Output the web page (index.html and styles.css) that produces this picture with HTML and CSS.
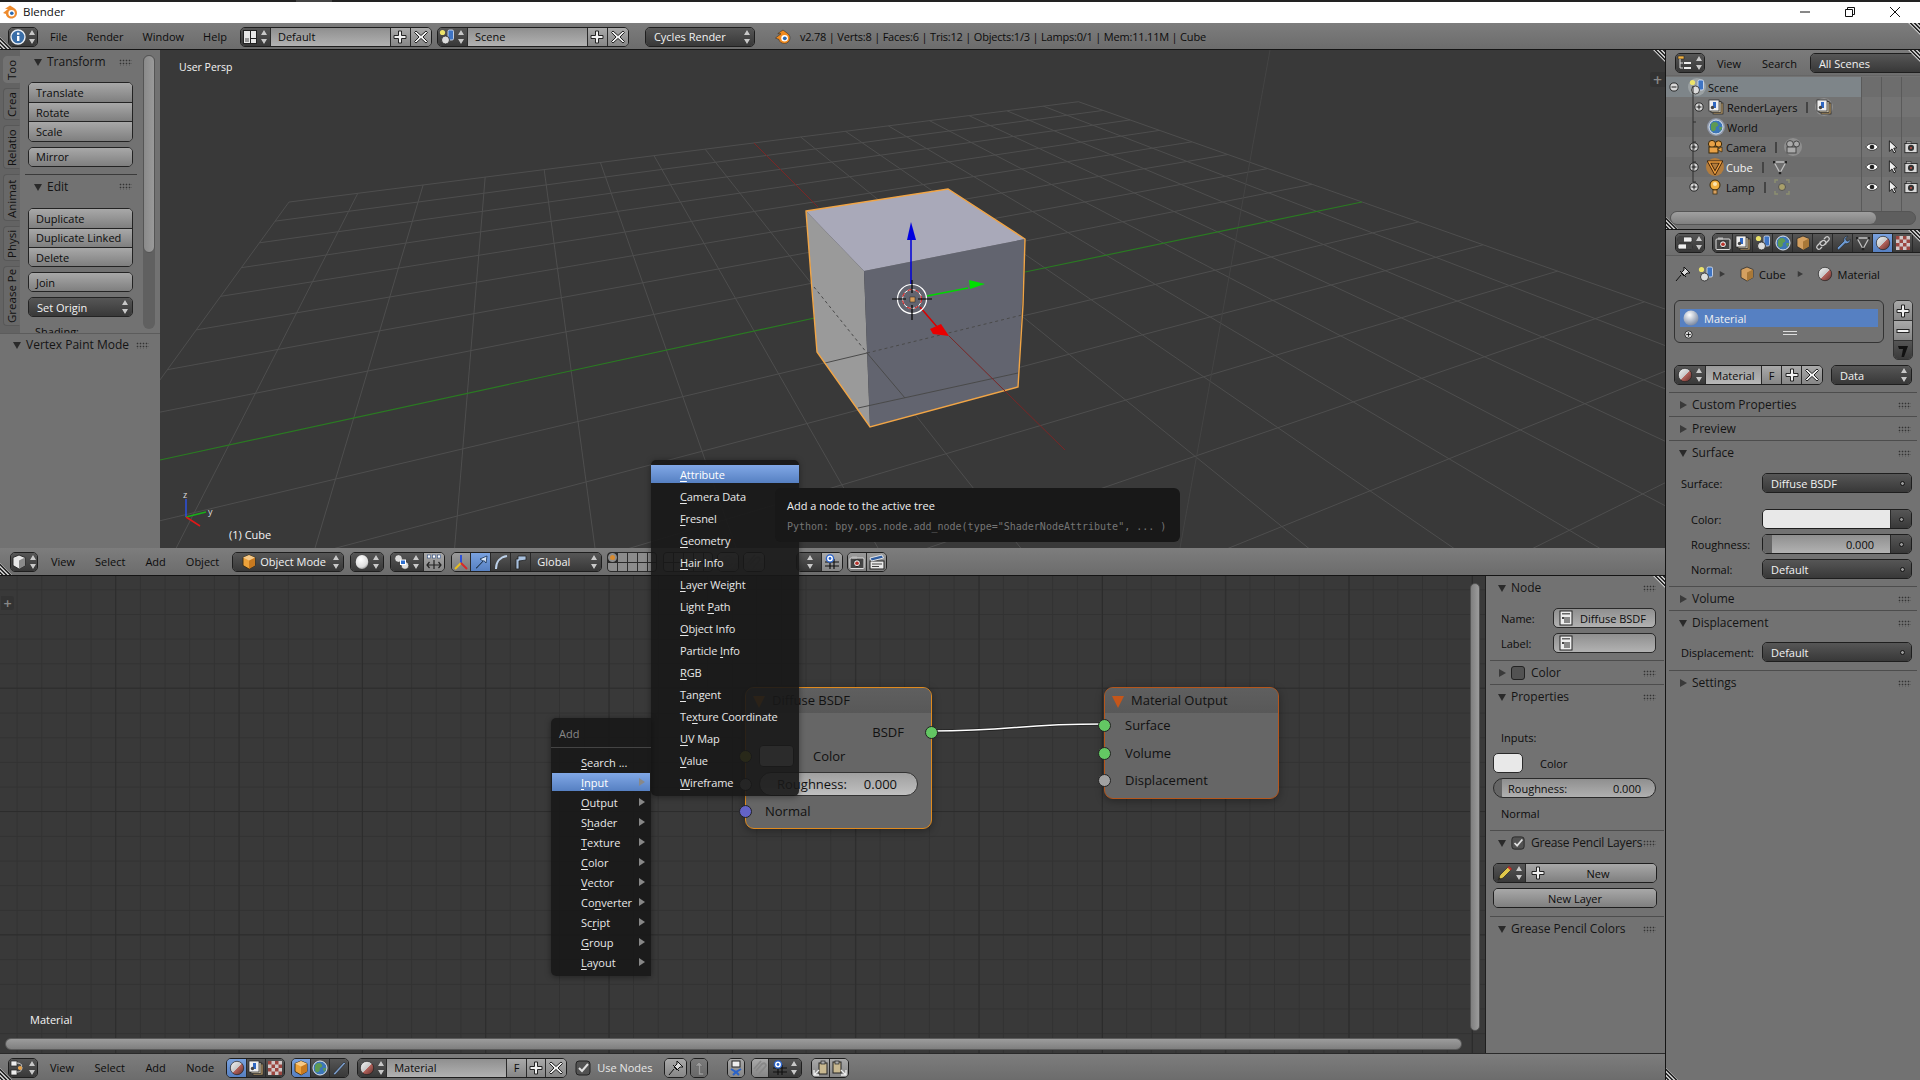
FILE: index.html
```html
<!DOCTYPE html>
<html lang="en">
<head>
<meta charset="utf-8">
<title>Blender</title>
<link rel="stylesheet" href="styles.css">
</head>
<body>
<svg class="sprite" aria-hidden="true">
<defs>
<symbol id="i-ud" viewBox="0 0 8 16"><path d="M4 1l3 5H1z M4 15l3-5H1z" fill="#c8c8c8"/></symbol>
<symbol id="i-tdown" viewBox="0 0 8 8"><path d="M0 1h8L4 8z" fill="#2a2a2a"/></symbol>
<symbol id="i-tright" viewBox="0 0 8 8"><path d="M1 0v8l7-4z" fill="#3a3a3a"/></symbol>
<symbol id="i-info" viewBox="0 0 16 16"><circle cx="8" cy="8" r="7" fill="#3a6ea8" stroke="#e8eef5" stroke-width="1.4"/><rect x="7" y="7" width="2.4" height="5" fill="#fff"/><rect x="7" y="3.6" width="2.4" height="2.2" fill="#fff"/></symbol>
<symbol id="i-layout" viewBox="0 0 16 16"><rect x="1" y="1" width="14" height="14" fill="#222"/><rect x="2" y="2" width="6" height="12" fill="#e8e8e8"/><rect x="9" y="2" width="5" height="7" fill="#e8e8e8"/><rect x="9" y="10" width="5" height="4" fill="#e8e8e8"/><rect x="3" y="9" width="4" height="4" fill="#999"/></symbol>
<symbol id="i-scene" viewBox="0 0 16 16"><circle cx="3.5" cy="3.5" r="2.6" fill="#ece36a"/><rect x="9" y="1" width="5.5" height="10" rx="1.4" fill="#3e74c4" stroke="#dfe9f8" stroke-width=".8"/><circle cx="6.5" cy="11" r="4" fill="#ddd" stroke="#222" stroke-width=".8"/></symbol>
<symbol id="i-plus" viewBox="0 0 16 16"><path d="M6.5 2h3v4.5H14v3H9.500V14h-3V9.500H2v-3h4.500z" fill="#f0f0f0" stroke="#222" stroke-width="1"/></symbol>
<symbol id="i-x" viewBox="0 0 16 16"><path d="M3 2l5 4.500L13 2l1.500 1.500L10 8l4.500 4.500L13 14 8 9.500 3 14l-1.500-1.500L6 8 1.500 3.500z" fill="#f0f0f0" stroke="#222" stroke-width="1"/></symbol>
<symbol id="i-logo" viewBox="0 0 16 16"><path d="M1 9l5-4-3-.2L8 1.500l4 2.500c2 1.300 3 3 3 5 0 3-2.500 5.500-5.500 5.500S4 12.500 4 10z" fill="#ee8a2c"/><circle cx="9.600" cy="9.300" r="3.200" fill="#fff"/><circle cx="9.800" cy="9.300" r="1.800" fill="#2a68b0"/></symbol>
<symbol id="i-logok" viewBox="0 0 16 16"><path d="M.5 9l5.500-4.200-3.200-.2L8 1l4 3c2 1.300 3 3 3 5 0 3-2.500 5.500-5.500 5.500S4 12.500 4 10.500z" fill="#f08a1e" stroke="#222" stroke-width=".5"/><circle cx="9.600" cy="9.300" r="3.300" fill="#fff"/><circle cx="9.800" cy="9.300" r="1.900" fill="#2a68b0"/></symbol>
<symbol id="i-view" viewBox="0 0 16 16"><path d="M8 1l6 2.500v8L8 15l-6-3.500v-8z" fill="#e8e8e8" stroke="#222" stroke-width=".9"/><path d="M8 6.500V15l6-3.500v-8z" fill="#8a8a8a"/></symbol>
<symbol id="i-cube" viewBox="0 0 16 16"><path d="M8 1l6 2.500v8L8 15l-6-3.500v-8z" fill="#eda23a" stroke="#3a2a10" stroke-width=".9"/><path d="M8 6.500V15l6-3.500v-8z" fill="#c87a20"/><path d="M2 3.500l6 3 6-3-6-2.500z" fill="#f6c987"/></symbol>
<symbol id="i-sphere" viewBox="0 0 16 16"><defs><radialGradient id="g-s" cx=".4" cy=".3" r=".8"><stop offset="0" stop-color="#fff"/><stop offset=".7" stop-color="#ddd"/><stop offset="1" stop-color="#777"/></radialGradient></defs><ellipse cx="8" cy="8" rx="6.300" ry="7" fill="url(#g-s)"/></symbol>
<symbol id="i-pivot" viewBox="0 0 16 16"><circle cx="4.500" cy="4.500" r="3.800" fill="#ddd" stroke="#222" stroke-width=".6"/><circle cx="11" cy="11.500" r="3.800" fill="#ddd" stroke="#222" stroke-width=".6"/><rect x="6.500" y="6" width="5" height="4.500" fill="#2d6fd0" stroke="#fff"/></symbol>
<symbol id="i-dots" viewBox="0 0 16 16"><g fill="#fff" stroke="#2a4a80" stroke-width=".6"><rect x="1.500" y="1" width="3" height="3"/><rect x="6.500" y="1" width="3" height="3"/><rect x="11.500" y="1" width="3" height="3"/></g><path d="M1 11h14M3.500 8L1 11l2.500 3M12.500 8L15 11l-2.500 3M8 6v9" fill="none" stroke="#222" stroke-width="1.200"/></symbol>
<symbol id="i-axes" viewBox="0 0 16 16"><path d="M8 9V1" stroke="#2c50d8" stroke-width="2"/><path d="M8 9l-6 6" stroke="#e8c020" stroke-width="2"/><path d="M8 9l6 6" stroke="#d82828" stroke-width="2"/></symbol>
<symbol id="i-arrow" viewBox="0 0 16 16"><path d="M3 14L10 7 7 5l7-3-1 7-2.200-2.500L4 14z" fill="#d8e6f8" stroke="#16304f" stroke-width=".8"/></symbol>
<symbol id="i-curve" viewBox="0 0 16 16"><path d="M3 15C3 8 7 3 14 2" fill="none" stroke="#bcd0e8" stroke-width="2"/></symbol>
<symbol id="i-scl" viewBox="0 0 16 16"><path d="M6 15V7l7-1V2H5v3H3v10z" fill="#a8c0de" stroke="#222" stroke-width=".8"/></symbol>
<symbol id="i-snap" viewBox="0 0 16 16"><path d="M1 8h14M1 12h14M6 5v10M10 5v10" stroke="#111" stroke-width="1.200"/><circle cx="6" cy="4.500" r="3.600" fill="#fff" stroke="#2a62c8" stroke-width="1.400"/><circle cx="6" cy="4.500" r="1.400" fill="#2a62c8"/></symbol>
<symbol id="i-cam" viewBox="0 0 16 16"><rect x="1" y="4" width="14" height="10.500" rx="1" fill="#444" stroke="#ddd" stroke-width="1"/><rect x="3" y="2.500" width="5" height="2" fill="#bbb"/><circle cx="8" cy="9.200" r="3.500" fill="#ddd" stroke="#222"/><circle cx="8" cy="9.200" r="1.800" fill="#b8322a"/></symbol>
<symbol id="i-clap" viewBox="0 0 16 16"><rect x="1" y="7" width="14" height="8" fill="#e8e8e8" stroke="#222"/><path d="M1 4l12-3 1.500 3-12 3z" fill="#2e5ca0" stroke="#eee" stroke-width=".9"/><path d="M3 10h10M3 12.500h7" stroke="#444"/></symbol>
<symbol id="i-outl" viewBox="0 0 16 16"><rect x="1" y="1" width="6" height="3" fill="#f0b040" stroke="#222" stroke-width=".6"/><path d="M3 4v9h3M3 8h3" stroke="#ddd" fill="none"/><rect x="7" y="7" width="7" height="2" fill="#eee"/><rect x="7" y="12" width="7" height="2" fill="#eee"/></symbol>
<symbol id="i-eye" viewBox="0 0 16 16"><path d="M1 8c3-5 11-5 14 0-3 5-11 5-14 0z" fill="#fff" stroke="#111" stroke-width=".8"/><circle cx="8" cy="8" r="2.700" fill="#222"/></symbol>
<symbol id="i-curs" viewBox="0 0 16 16"><path d="M5 1v12l3-2.800 2.200 4.500 2-1-2.200-4.300 3.500-.5z" fill="#eee" stroke="#111"/></symbol>
<symbol id="i-rend" viewBox="0 0 16 16"><rect x="1" y="4" width="14" height="10.500" fill="#d8d8d8" stroke="#222"/><rect x="3" y="2" width="5" height="2" fill="#aaa" stroke="#222" stroke-width=".5"/><circle cx="8" cy="9" r="3.500" fill="#333"/><circle cx="8" cy="9" r="1.200" fill="#a84a42"/></symbol>
<symbol id="i-rl" viewBox="0 0 16 16"><rect x="5" y="4" width="10" height="11" fill="#b89a68" stroke="#222" stroke-width=".7"/><rect x="3" y="2.500" width="10" height="11" fill="#cfc6b0" stroke="#222" stroke-width=".7"/><rect x="1" y="1" width="10" height="11" fill="#eee" stroke="#222" stroke-width=".7"/><rect x="5" y="3" width="3" height="6" fill="#2f67c2"/><circle cx="4.500" cy="8.500" r="1.700" fill="#444"/></symbol>
<symbol id="i-world" viewBox="0 0 16 16"><circle cx="8" cy="8" r="7" fill="#3c76b8" stroke="#dfe6ee"/><path d="M4 4c3-2 5-1 6 1s-1 2-2 3 1 3-2 4-3-2-3-4 0-3 1-4z" fill="#5e9a52"/><path d="M11 8l3 0c0 2-1 3-2 4z" fill="#5e9a52"/></symbol>
<symbol id="i-box" viewBox="0 0 16 16"><path d="M8 1l6 2.500v8L8 15l-6-3.500v-8z" fill="#d4a060" stroke="#222" stroke-width=".7"/><path d="M8 6.500V15l6-3.500v-8z" fill="#a87838"/></symbol>
<symbol id="i-link" viewBox="0 0 16 16"><path d="M2 11l5-5a2.500 2.500 0 013.500 3.500M14 5l-5 5a2.500 2.500 0 01-3.500-3.500M2 11a2.200 2.200 0 003 3l2-2M14 5a2.200 2.200 0 00-3-3L9 4" fill="none" stroke="#ccc" stroke-width="1.300"/></symbol>
<symbol id="i-wr" viewBox="0 0 16 16"><path d="M2 13l7-7c-.8-2.500 1-5 4-4.800L10.500 3.700l.8 1.800 1.800.8 2-2c.5 3-2.200 5-5 4.300L3.500 15z" fill="#6d9bd4" stroke="#222" stroke-width=".6"/></symbol>
<symbol id="i-mesh" viewBox="0 0 16 16"><path d="M2 3h12L8 14z" fill="none" stroke="#c0c0c0" stroke-width="1.300"/><rect x="1" y="2" width="2.400" height="2.400" fill="#222"/><rect x="12.600" y="2" width="2.400" height="2.400" fill="#222"/><rect x="6.800" y="12.800" width="2.400" height="2.400" fill="#222"/></symbol>
<symbol id="i-meshc" viewBox="0 0 16 16"><path d="M2 3h12L8 14z" fill="none" stroke="#3a2008" stroke-width="3"/><path d="M2 3h12L8 14z" fill="none" stroke="#f0a040" stroke-width="1.400"/></symbol>
<symbol id="i-mat" viewBox="0 0 16 16"><defs><linearGradient id="g-m" x1="0" y1="0" x2="1" y2="1"><stop offset="0" stop-color="#f4f4f4"/><stop offset=".5" stop-color="#c8c8c8"/><stop offset=".51" stop-color="#b8655e"/><stop offset="1" stop-color="#5c2c28"/></linearGradient></defs><circle cx="8" cy="8" r="6.700" fill="url(#g-m)" stroke="#222" stroke-width=".7"/></symbol>
<symbol id="i-tex" viewBox="0 0 16 16"><rect x="1" y="1" width="14" height="14" fill="#d0c8c8"/><path d="M1 1h3.500v3.500H1zM8 1h3.500v3.500H8zM4.500 4.500H8V8H4.500zM11.500 4.500H15V8h-3.500zM1 8h3.500v3.500H1zM8 8h3.500v3.500H8zM4.500 11.500H8V15H4.500zM11.500 11.500H15V15h-3.500z" fill="#9c4640"/></symbol>
<symbol id="i-pin" viewBox="0 0 16 16"><path d="M1 15l5-6M5 5l6 6M9 1l6 6-3 0-3 3-3-3 3-3z" fill="#ddd" stroke="#111"/></symbol>
<symbol id="i-node" viewBox="0 0 16 16"><rect x="2" y="1" width="12" height="14" fill="#eee" stroke="#222"/><rect x="4" y="3" width="8" height="1.500" fill="#666"/><rect x="6" y="7" width="6" height="6" fill="#888"/><rect x="4" y="7" width="2" height="2" fill="#444"/></symbol>
<symbol id="i-pencil" viewBox="0 0 16 16"><path d="M1 15l2-5L12 1l3 3-9 9z" fill="#e0c84a" stroke="#222" stroke-width=".7"/><path d="M12 1l3 3-1.500 1.500-3-3z" fill="#c03030"/><path d="M1 15l1-3 2 2z" fill="#222"/></symbol>
<symbol id="i-lamp" viewBox="0 0 16 16"><circle cx="8" cy="6" r="5" fill="#f0b040" stroke="#3a2808"/><circle cx="8" cy="5" r="2" fill="#fbe6b0"/><rect x="6" y="11" width="4" height="4" fill="#d8a060" stroke="#3a2808" stroke-width=".7"/></symbol>
<symbol id="i-camo" viewBox="0 0 16 16"><circle cx="5" cy="5" r="3.600" fill="#e9a247" stroke="#3a2808"/><circle cx="11.500" cy="5" r="3.200" fill="#e9a247" stroke="#3a2808"/><rect x="2" y="8" width="9" height="6" fill="#e9a247" stroke="#3a2808"/><path d="M11 10l4-2v5l-4-2z" fill="#e9a247" stroke="#3a2808" stroke-width=".7"/></symbol>
<symbol id="i-camg" viewBox="0 0 16 16"><circle cx="5" cy="5" r="3.400" fill="#aaa" stroke="#444"/><circle cx="11.500" cy="5" r="3" fill="#aaa" stroke="#444"/><rect x="2" y="8" width="9" height="6" fill="#aaa" stroke="#444"/></symbol>
<symbol id="i-lmp2" viewBox="0 0 16 16"><circle cx="8" cy="8" r="3.500" fill="#a9a06a" stroke="#555"/><path d="M1 4V1h3M12 1h3v3M15 12v3h-3M4 15H1v-3" fill="none" stroke="#8d9070" stroke-width="1.400"/></symbol>
<symbol id="i-plc" viewBox="0 0 16 16"><circle cx="8" cy="8" r="6.500" fill="#d8d8d8" stroke="#111" stroke-width="1.300"/><path d="M4 8h8M8 4v8" stroke="#111" stroke-width="1.500"/></symbol>
<symbol id="i-mic" viewBox="0 0 16 16"><circle cx="8" cy="8" r="6.500" fill="#d8d8d8" stroke="#111" stroke-width="1.300"/><path d="M4 8h8" stroke="#111" stroke-width="1.500"/></symbol>
<symbol id="i-minus" viewBox="0 0 16 16"><rect x="2" y="6.500" width="12" height="3" fill="#f0f0f0" stroke="#222"/></symbol>
<symbol id="i-more" viewBox="0 0 16 16"><path d="M3 3h10L9 14H6.500L8 6H4z" fill="#111"/></symbol>
<symbol id="i-prop" viewBox="0 0 16 16"><rect x="1" y="2" width="14" height="5" rx="1.500" fill="#eee" stroke="#222" stroke-width=".7"/><rect x="1" y="9" width="14" height="5" rx="1.500" fill="#eee" stroke="#222" stroke-width=".7"/><rect x="1" y="2" width="6" height="5" fill="#444"/><rect x="9" y="9" width="6" height="5" fill="#444"/></symbol>
<symbol id="i-nodeed" viewBox="0 0 16 16"><rect x="1" y="1" width="6" height="5" fill="#eee" stroke="#222" stroke-width=".7"/><rect x="1" y="10" width="6" height="5" fill="#eee" stroke="#222" stroke-width=".7"/><path d="M7 3c6 0 6 5 1 5l3 0M7 12c4 0 5-2 5-5" fill="none" stroke="#ccc"/><circle cx="10" cy="8" r="2" fill="#e9a247"/></symbol>
<symbol id="i-plane" viewBox="0 0 16 16"><path d="M2 14L13 2l1.500 1.500L4 15z" fill="#7a9bc8" stroke="#222" stroke-width=".6"/></symbol>
<symbol id="i-up" viewBox="0 0 16 16"><path d="M8 2l4 4H9.500v7h3v2h-5V6H4z" fill="#9c9c9c" stroke="#666" stroke-width=".6"/></symbol>
<symbol id="i-bat" viewBox="0 0 16 16"><rect x="4" y="1" width="8" height="6" fill="#eee" stroke="#222"/><path d="M3 9l5 3 5-3M5 15l3-3 3 3" fill="none" stroke="#2a62c8" stroke-width="2"/></symbol>
<symbol id="i-mag" viewBox="0 0 16 16"><path d="M4 11l6-7c3-2 5 1 3 3l-6 7M2 9l7-8" fill="none" stroke="#888" stroke-width="1.800"/></symbol>
<symbol id="i-copy" viewBox="0 0 16 16"><rect x="6" y="3" width="8" height="11" fill="#c8b890" stroke="#222"/><rect x="8" y="1" width="4" height="3" fill="#aaa" stroke="#222" stroke-width=".7"/><path d="M1 15l5-5M1 10v5h5" fill="none" stroke="#eee" stroke-width="1.400"/></symbol>
<symbol id="i-paste" viewBox="0 0 16 16"><rect x="2" y="2" width="8" height="11" fill="#c8b890" stroke="#222"/><rect x="4" y="1" width="4" height="3" fill="#aaa" stroke="#222" stroke-width=".7"/><path d="M10 10l5 5M15 10v5h-5" fill="none" stroke="#eee" stroke-width="1.400"/></symbol>
<symbol id="i-check" viewBox="0 0 16 16"><rect x="1" y="1" width="14" height="14" rx="3" fill="#525252" stroke="#222"/><path d="M4 8l3 3 6-7" fill="none" stroke="#e0e0e0" stroke-width="2"/></symbol>
<symbol id="i-lock" viewBox="0 0 16 16"><circle cx="8" cy="8" r="6" fill="none" stroke="#999" stroke-width="1.500"/><circle cx="8" cy="8" r="2.500" fill="none" stroke="#999"/></symbol>
<symbol id="i-sph" viewBox="0 0 16 16"><defs><radialGradient id="g-b" cx=".4" cy=".3" r=".8"><stop offset="0" stop-color="#fff"/><stop offset="1" stop-color="#6a7a96"/></radialGradient></defs><circle cx="8" cy="8" r="7.500" fill="url(#g-b)"/></symbol>
</defs>
</svg>

<div class="app">
  <div class="winstrip"><span class="winpatch"></span></div>
  <header class="titlebar">
    <svg class="ic tb-logo"><use href="#i-logo"/></svg>
    <span class="tb-title">Blender</span>
    <span class="tb-controls">
      <svg class="tb-ic" viewBox="0 0 12 12"><path d="M1 6h10" stroke="#111"/></svg>
      <svg class="tb-ic" viewBox="0 0 12 12"><path d="M1.500 3.500h7v7h-7zM3.500 3.500v-2h7v7h-2" fill="none" stroke="#111"/></svg>
      <svg class="tb-ic" viewBox="0 0 12 12"><path d="M1 1l10 10M11 1L1 11" stroke="#111"/></svg>
    </span>
  </header>

  <div class="hdr info">
    <span class="grip grip-bl"></span>
    <span class="group ml8"><span class="seg dk w28"><svg class="ic"><use href="#i-info"/></svg><svg class="ud"><use href="#i-ud"/></svg></span></span>
    <nav class="hmenu m-info"><span>File</span><span>Render</span><span>Window</span><span>Help</span></nav>
    <span class="group m-layout">
      <span class="seg dk w30"><svg class="ic"><use href="#i-layout"/></svg><svg class="ud"><use href="#i-ud"/></svg></span>
      <span class="seg fld w120">Default</span>
      <span class="seg lt w20"><svg class="ic"><use href="#i-plus"/></svg></span>
      <span class="seg lt w20"><svg class="ic"><use href="#i-x"/></svg></span>
    </span>
    <span class="group ml5">
      <span class="seg dk w30"><svg class="ic"><use href="#i-scene"/></svg><svg class="ud"><use href="#i-ud"/></svg></span>
      <span class="seg fld w120">Scene</span>
      <span class="seg lt w20"><svg class="ic"><use href="#i-plus"/></svg></span>
      <span class="seg lt w20"><svg class="ic"><use href="#i-x"/></svg></span>
    </span>
    <span class="group m-engine"><span class="seg dk seltext w108"><span class="grow">Cycles Render</span><svg class="ud"><use href="#i-ud"/></svg></span></span>
    <svg class="ic m-blogo"><use href="#i-logok"/></svg>
    <span class="stats">v2.78 | Verts:8 | Faces:6 | Tris:12 | Objects:1/3 | Lamps:0/1 | Mem:11.11M | Cube</span>
    <span class="grip grip-tr"></span>
  </div>

  <div class="main">
    <div class="leftcol">
      <section class="view3d">
        <svg class="scene" viewBox="0 50 1665 498">
          <g id="grid" stroke="#4e4e4e" stroke-width="1"></g>
          <path d="M1270 50L1214 360 1180 548" stroke="#444" fill="none"/>
          <path d="M754 143L818 207" stroke="#7a2626" stroke-width="1"/>
          <path d="M160 460L833 314" stroke="#2a7a22" stroke-width="1.200"/>
          <path d="M1025 272L1362 202" stroke="#2a7a22" stroke-width="1.200"/>
          <path d="M806 211L864 271 870 427 817 352z" fill="#9a9a9a"/>
          <path d="M864 271L1025 239 1018 387 870 427z" fill="#62646f"/>
          <path d="M806 211L948 189 1025 239 864 271z" fill="#a9a9b9"/>
          <g fill="none" stroke="#4a4a4a" stroke-width="1">
            <path d="M814 287L867 353" stroke-dasharray="3 3"/>
            <path d="M825 363L867 353" />
            <path d="M867 353L1022 315" stroke-dasharray="3 3"/>
            <path d="M858 408L1018 373"/>
            <path d="M867 353L905 398"/>
          </g>
          <path d="M806 211L948 189 1025 239 1023 305 1018 387 870 427 817 352 812 290z" fill="none" stroke="#f1a546" stroke-width="1.400"/>
          <path d="M949 336L1065 450" stroke="#7a2626" fill="none"/>
          <path d="M911 285V238" stroke="#0000d8" stroke-width="1.500"/>
          <path d="M911 222l5 18h-9z" fill="#0000e0"/>
          <path d="M927 296L968 288" stroke="#00d800" stroke-width="1.500"/>
          <path d="M985 284l-16-4 1 9z" fill="#00e000"/>
          <path d="M920 307L938 328" stroke="#d80000" stroke-width="1.500"/>
          <path d="M949 336l-8-12-11 5 3 5z" fill="#e80000"/>
          <circle cx="912" cy="299" r="14.500" fill="none" stroke="#fff" stroke-width="1.200"/>
          <circle cx="912" cy="299" r="9.500" fill="none" stroke="#fff"/>
          <circle cx="912" cy="299" r="9.500" fill="none" stroke="#d80000" stroke-dasharray="4 4"/>
          <path d="M892 299h14M918 299h14M912 280v13M912 305v15" stroke="#000" stroke-width="1.200"/>
          <rect x="910" y="297" width="5" height="5" fill="#d49a58" stroke="#222" stroke-width=".5"/>
          <path d="M186 517V499" stroke="#2c50e0" stroke-width="1.500"/>
          <path d="M186 517L206 512" stroke="#18b018" stroke-width="1.500"/>
          <path d="M186 517L200 526" stroke="#e01818" stroke-width="1.500"/>
          <text class="axis-t" x="183" y="498">z</text>
          <text class="axis-t" x="208" y="515">y</text>
        </svg>
        <aside class="shelf">
          <div class="shelf-top">
            <nav class="tabs">
              <span class="tab on t27">Too</span>
              <span class="tab t32">Crea</span>
              <span class="tab t44">Relatio</span>
              <span class="tab t47">Animat</span>
              <span class="tab t35">Physi</span>
              <span class="tab t60">Grease Pe</span>
            </nav>
            <div class="panels">
              <div class="ph"><svg class="tri"><use href="#i-tdown"/></svg><span class="grow">Transform</span><span class="dots"></span></div>
              <div class="bstack mt8"><span class="btn">Translate</span><span class="btn">Rotate</span><span class="btn">Scale</span></div>
              <div class="bstack one mt5"><span class="btn">Mirror</span></div>
              <div class="pdiv"></div>
              <div class="ph"><svg class="tri"><use href="#i-tdown"/></svg><span class="grow">Edit</span><span class="dots"></span></div>
              <div class="bstack mt9"><span class="btn">Duplicate</span><span class="btn">Duplicate Linked</span><span class="btn">Delete</span></div>
              <div class="bstack one mt5"><span class="btn">Join</span></div>
              <div class="bstack dkbtn mt5"><span class="seg dk seltext"><span class="grow">Set Origin</span><svg class="ud"><use href="#i-ud"/></svg></span></div>
              <div class="shading">Shading:</div>
            </div>
            <div class="vsb"><span class="vsb-thumb"></span></div>
          </div>
          <div class="shelf-mode"><svg class="tri"><use href="#i-tdown"/></svg><span class="grow">Vertex Paint Mode</span><span class="dots"></span></div>
        </aside>
        <span class="ov persp">User Persp</span>
        <span class="ov objname">(1) Cube</span>
        <span class="viewplus">+</span>
        <span class="grip grip-tr"></span>
      </section>

      <div class="hdr h3d">
        <span class="grip grip-bl"></span>
        <span class="group ml10"><span class="seg dk w26"><svg class="ic"><use href="#i-view"/></svg><svg class="ud"><use href="#i-ud"/></svg></span></span>
        <nav class="hmenu m-3d"><span>View</span><span>Select</span><span>Add</span><span>Object</span></nav>
        <span class="group ml13"><span class="seg dk seltext w110"><svg class="ic"><use href="#i-cube"/></svg><span class="grow pl3">Object Mode</span><svg class="ud"><use href="#i-ud"/></svg></span></span>
        <span class="group ml6"><span class="seg dk w32"><svg class="ic"><use href="#i-sphere"/></svg><svg class="ud"><use href="#i-ud"/></svg></span></span>
        <span class="group ml6">
          <span class="seg dk w33"><svg class="ic"><use href="#i-pivot"/></svg><svg class="ud"><use href="#i-ud"/></svg></span>
          <span class="seg lt w20"><svg class="ic"><use href="#i-dots"/></svg></span>
        </span>
        <span class="group ml6">
          <span class="seg lt2 w19"><svg class="ic"><use href="#i-axes"/></svg></span>
          <span class="seg blue w20"><svg class="ic"><use href="#i-arrow"/></svg></span>
          <span class="seg dk w20"><svg class="ic"><use href="#i-curve"/></svg></span>
          <span class="seg dk w20"><svg class="ic"><use href="#i-scl"/></svg></span>
          <span class="seg dk seltext gl w70"><span class="grow">Global</span><svg class="ud"><use href="#i-ud"/></svg></span>
        </span>
        <span class="layers ml5"><i class="on"></i><i></i><i></i><i></i><i></i><i></i><i></i><i></i><i></i><i></i></span>
        <span class="layers ml6"><i></i><i></i><i></i><i></i><i></i><i></i><i></i><i></i><i></i><i></i></span>
        <span class="group ml4"><span class="seg lt w20"><svg class="ic"><use href="#i-lock"/></svg></span></span>
        <span class="group ml4"><span class="seg lt w20"><svg class="ic"><use href="#i-mag"/></svg></span></span>
        <span class="group ml31"><span class="seg dk w25"><svg class="ud"><use href="#i-ud"/></svg></span><span class="seg lt w20"><svg class="ic"><use href="#i-snap"/></svg></span></span>
        <span class="group ml4"><span class="seg lt2 w19"><svg class="ic"><use href="#i-cam"/></svg></span><span class="seg lt2 w19"><svg class="ic"><use href="#i-clap"/></svg></span></span>
      </div>

      <section class="nodecanvas">
        <svg class="links" viewBox="0 0 1485 477"><path d="M930 155C1020 155 1010 148 1104 148" fill="none" stroke="#222" stroke-width="3.200"/><path d="M930 155C1020 155 1010 148 1104 148" fill="none" stroke="#fff" stroke-width="1.600"/></svg>
        <article class="node nd-bsdf">
          <div class="nhead"><span>Diffuse BSDF</span></div>
          <div class="nbody">
            <div class="n-right">BSDF<span class="sock g right"></span></div>
            <div class="n-color"><span class="sock ye"></span><span class="swatch"></span><span>Color</span></div>
            <div class="n-rough"><span class="sock gr"></span><span class="pill"><span>Roughness:</span><span>0.000</span></span></div>
            <div class="n-norm"><span class="sock bl"></span>Normal</div>
          </div>
        </article>
        <article class="node nd-out">
          <div class="nhead"><span class="otri"></span><span>Material Output</span></div>
          <div class="nbody">
            <div class="n-row"><span class="sock g"></span>Surface</div>
            <div class="n-row"><span class="sock g"></span>Volume</div>
            <div class="n-row"><span class="sock gy"></span>Displacement</div>
          </div>
        </article>
        <span class="nodeplus">+</span>
        <span class="ov matlabel">Material</span>
        <div class="hsb"></div>
        <div class="nvsb"></div>
        <aside class="nside">
          <span class="grip grip-tr"></span>
          <div class="sec">
            <div class="ph side"><svg class="tri"><use href="#i-tdown"/></svg><span class="grow">Node</span><span class="dots"></span></div>
            <div class="frow mt8"><label>Name:</label><span class="tfield"><svg class="ic"><use href="#i-node"/></svg>Diffuse BSDF</span></div>
            <div class="frow mt5"><label>Label:</label><span class="tfield"><svg class="ic"><use href="#i-node"/></svg></span></div>
          </div>
          <div class="sec cl">
            <div class="ph side"><svg class="tri"><use href="#i-tright"/></svg><span class="ck"></span><span class="grow">Color</span><span class="dots"></span></div>
          </div>
          <div class="sec prop">
            <div class="ph side"><svg class="tri"><use href="#i-tdown"/></svg><span class="grow">Properties</span><span class="dots"></span></div>
            <div class="inp">Inputs:</div>
            <div class="colrow"><span class="swatch2"></span><span>Color</span></div>
            <div class="num wide"><span>Roughness:</span><span>0.000</span></div>
            <div class="nrm">Normal</div>
          </div>
          <div class="sec gp">
            <div class="ph side"><svg class="tri"><use href="#i-tdown"/></svg><svg class="ic ckic"><use href="#i-check"/></svg><span class="grow tight">Grease Pencil Layers</span><span class="dots"></span></div>
            <div class="group gpnew">
              <span class="seg dk w32"><svg class="ic"><use href="#i-pencil"/></svg><svg class="ud"><use href="#i-ud"/></svg></span>
              <span class="seg btnseg grow rel newbtn"><svg class="ic gpplus"><use href="#i-plus"/></svg>New</span>
            </div>
            <div class="group gpnl"><span class="seg btnseg grow">New Layer</span></div>
          </div>
          <div class="sec last">
            <div class="ph side"><svg class="tri"><use href="#i-tdown"/></svg><span class="grow">Grease Pencil Colors</span><span class="dots"></span></div>
          </div>
        </aside>
      </section>

      <div class="hdr hnode">
        <span class="grip grip-bl"></span>
        <span class="group ml8"><span class="seg dk w28"><svg class="ic"><use href="#i-nodeed"/></svg><svg class="ud"><use href="#i-ud"/></svg></span></span>
        <nav class="hmenu m-node"><span>View</span><span>Select</span><span>Add</span><span>Node</span></nav>
        <span class="group ml12">
          <span class="seg blue w20"><svg class="ic"><use href="#i-mat"/></svg></span>
          <span class="seg dk w19"><svg class="ic"><use href="#i-rl"/></svg></span>
          <span class="seg dk w18"><svg class="ic"><use href="#i-tex"/></svg></span>
        </span>
        <span class="group ml6">
          <span class="seg blue w19"><svg class="ic"><use href="#i-cube"/></svg></span>
          <span class="seg dk w19"><svg class="ic"><use href="#i-world"/></svg></span>
          <span class="seg dk w18"><svg class="ic"><use href="#i-plane"/></svg></span>
        </span>
        <span class="group ml8">
          <span class="seg dk w29"><svg class="ic"><use href="#i-mat"/></svg><svg class="ud"><use href="#i-ud"/></svg></span>
          <span class="seg fld w120">Material</span>
          <span class="seg lt w20">F</span>
          <span class="seg lt w19"><svg class="ic"><use href="#i-plus"/></svg></span>
          <span class="seg lt w20"><svg class="ic"><use href="#i-x"/></svg></span>
        </span>
        <svg class="ic ml8"><use href="#i-check"/></svg>
        <span class="usenodes">Use Nodes</span>
        <span class="group ml12"><span class="seg lt w21"><svg class="ic"><use href="#i-pin"/></svg></span></span>
        <span class="group ml3"><span class="seg mid w16"><svg class="ic"><use href="#i-up"/></svg></span></span>
        <span class="group ml19"><span class="seg lt w16"><svg class="ic"><use href="#i-bat"/></svg></span></span>
        <span class="group ml6"><span class="seg lt w17"><svg class="ic"><use href="#i-mag"/></svg></span><span class="seg dk w32"><svg class="ic"><use href="#i-snap"/></svg><svg class="ud"><use href="#i-ud"/></svg></span></span>
        <span class="group ml9"><span class="seg lt w18"><svg class="ic"><use href="#i-copy"/></svg></span><span class="seg lt w18"><svg class="ic"><use href="#i-paste"/></svg></span></span>
      </div>
    </div>

    <div class="rightcol">
      <div class="hdr oh">
        <span class="group ml9"><span class="seg dk w28"><svg class="ic"><use href="#i-outl"/></svg><svg class="ud"><use href="#i-ud"/></svg></span></span>
        <nav class="hmenu m-ol"><span>View</span><span>Search</span></nav>
        <span class="group ml13 allsc"><span class="seg dk seltext grow">All Scenes</span></span>
        <span class="grip grip-tr"></span>
      </div>
      <div class="outliner">
        <div class="orow hi"><div class="oname i0"><svg class="exp"><use href="#i-mic"/></svg><span class="oic halo"><svg class="ic"><use href="#i-scene"/></svg></span><span>Scene</span></div><i class="oc"></i><i class="oc"></i><i class="oc"></i></div>
        <div class="orow"><div class="oname i1"><svg class="exp"><use href="#i-plc"/></svg><svg class="ic"><use href="#i-rl"/></svg><span>RenderLayers</span><b class="osep"></b><span class="oic halo2"><svg class="ic"><use href="#i-rl"/></svg></span></div><i class="oc"></i><i class="oc"></i><i class="oc"></i></div>
        <div class="orow alt"><div class="oname i2"><span class="oic halo3"><svg class="ic"><use href="#i-world"/></svg></span><span>World</span></div><i class="oc"></i><i class="oc"></i><i class="oc"></i></div>
        <div class="orow"><div class="oname i3"><svg class="exp"><use href="#i-plc"/></svg><svg class="ic"><use href="#i-camo"/></svg><span>Camera</span><b class="osep"></b><span class="oic halo2"><svg class="ic"><use href="#i-camg"/></svg></span></div><i class="oc"><svg class="ic"><use href="#i-eye"/></svg></i><i class="oc"><svg class="ic"><use href="#i-curs"/></svg></i><i class="oc"><svg class="ic"><use href="#i-rend"/></svg></i></div>
        <div class="orow alt"><div class="oname i3"><svg class="exp"><use href="#i-plc"/></svg><span class="oic haloo"><svg class="ic"><use href="#i-meshc"/></svg></span><span class="whitet">Cube</span><b class="osep"></b><svg class="ic"><use href="#i-mesh"/></svg></div><i class="oc"><svg class="ic"><use href="#i-eye"/></svg></i><i class="oc"><svg class="ic"><use href="#i-curs"/></svg></i><i class="oc"><svg class="ic"><use href="#i-rend"/></svg></i></div>
        <div class="orow"><div class="oname i3"><svg class="exp"><use href="#i-plc"/></svg><svg class="ic"><use href="#i-lamp"/></svg><span>Lamp</span><b class="osep"></b><svg class="ic"><use href="#i-lmp2"/></svg></div><i class="oc"><svg class="ic"><use href="#i-eye"/></svg></i><i class="oc"><svg class="ic"><use href="#i-curs"/></svg></i><i class="oc"><svg class="ic"><use href="#i-rend"/></svg></i></div>
        <div class="orow tail"><div class="oname"></div><i class="oc"></i><i class="oc"></i><i class="oc"></i></div>
        <svg class="otree" viewBox="0 0 60 120"><path d="M27 10V106M27 46h3M27 66h3M27 86h3M27 106h3" stroke="#2e2e2e" fill="none"/></svg>
        <div class="ohsb"><span></span></div>
        <span class="grip grip-bl"></span>
      </div>
      <div class="hdr ph-hdr">
        <span class="group ml9"><span class="seg dk w28"><svg class="ic"><use href="#i-prop"/></svg><svg class="ud"><use href="#i-ud"/></svg></span></span>
        <span class="group ml7 ptabs">
          <span class="seg dk w20"><svg class="ic"><use href="#i-cam"/></svg></span>
          <span class="seg dk w20"><svg class="ic"><use href="#i-rl"/></svg></span>
          <span class="seg dk w20"><svg class="ic"><use href="#i-scene"/></svg></span>
          <span class="seg dk w20"><svg class="ic"><use href="#i-world"/></svg></span>
          <span class="seg dk w20"><svg class="ic"><use href="#i-box"/></svg></span>
          <span class="seg dk w20"><svg class="ic"><use href="#i-link"/></svg></span>
          <span class="seg dk w20"><svg class="ic"><use href="#i-wr"/></svg></span>
          <span class="seg dk w20"><svg class="ic"><use href="#i-mesh"/></svg></span>
          <span class="seg blue w20"><svg class="ic"><use href="#i-mat"/></svg></span>
          <span class="seg dk w20"><svg class="ic"><use href="#i-tex"/></svg></span>
          <span class="seg dk w20"></span>
        </span>
        <span class="grip grip-tr"></span>
      </div>
      <div class="props">
        <div class="crumbs">
          <svg class="ic"><use href="#i-pin"/></svg>
          <svg class="ic ml7"><use href="#i-scene"/></svg>
          <svg class="crumbtri"><use href="#i-tright"/></svg>
          <svg class="ic cr-ic1"><use href="#i-box"/></svg><span class="crumbt c-cube">Cube</span>
          <svg class="crumbtri c2"><use href="#i-tright"/></svg>
          <svg class="ic cr-ic2"><use href="#i-mat"/></svg><span class="crumbt">Material</span>
        </div>
        <div class="slots">
          <div class="slotlist">
            <div class="slot"><svg class="ic"><use href="#i-sph"/></svg><span>Material</span></div>
            <div class="slotfoot"><svg class="sm"><use href="#i-plc"/></svg><span class="handle"></span></div>
          </div>
          <div class="slotbtns">
            <span class="seg lt"><svg class="ic"><use href="#i-plus"/></svg></span>
            <span class="seg lt"><svg class="ic"><use href="#i-minus"/></svg></span>
            <span class="seg dk"><svg class="ic"><use href="#i-more"/></svg></span>
          </div>
        </div>
        <div class="matsel">
          <span class="group">
            <span class="seg dk w31"><svg class="ic"><use href="#i-mat"/></svg><svg class="ud"><use href="#i-ud"/></svg></span>
            <span class="seg fld2 w56">Material</span>
            <span class="seg lt w20">F</span>
            <span class="seg lt w20"><svg class="ic"><use href="#i-plus"/></svg></span>
            <span class="seg lt w20"><svg class="ic"><use href="#i-x"/></svg></span>
          </span>
          <span class="group ml8"><span class="seg dk seltext w79"><span class="grow">Data</span><svg class="ud"><use href="#i-ud"/></svg></span></span>
        </div>
        <div class="sec rp"><div class="ph side2"><svg class="tri"><use href="#i-tright"/></svg><span class="grow">Custom Properties</span><span class="dots"></span></div></div>
        <div class="sec rp"><div class="ph side2"><svg class="tri"><use href="#i-tright"/></svg><span class="grow">Preview</span><span class="dots"></span></div></div>
        <div class="sec rp surf">
          <div class="ph side2"><svg class="tri"><use href="#i-tdown"/></svg><span class="grow">Surface</span><span class="dots"></span></div>
          <div class="prow p1s"><label>Surface:</label><span class="group w150"><span class="seg dk seltext grow"><span class="grow">Diffuse BSDF</span><i class="dot"></i></span></span></div>
          <div class="prow indent m16"><label>Color:</label><span class="group w150"><span class="seg white grow"></span><span class="seg dk w20"><i class="dot"></i></span></span></div>
          <div class="prow indent m5"><label>Roughness:</label><span class="group w150"><span class="seg rough grow">0.000</span><span class="seg dk w20"><i class="dot"></i></span></span></div>
          <div class="prow indent m5"><label>Normal:</label><span class="group w150"><span class="seg dk seltext grow"><span class="grow">Default</span><i class="dot"></i></span></span></div>
        </div>
        <div class="sec rp"><div class="ph side2"><svg class="tri"><use href="#i-tright"/></svg><span class="grow">Volume</span><span class="dots"></span></div></div>
        <div class="sec rp disp">
          <div class="ph side2"><svg class="tri"><use href="#i-tdown"/></svg><span class="grow">Displacement</span><span class="dots"></span></div>
          <div class="prow p1"><label>Displacement:</label><span class="group w150"><span class="seg dk seltext grow"><span class="grow">Default</span><i class="dot"></i></span></span></div>
        </div>
        <div class="sec rp"><div class="ph side2"><svg class="tri"><use href="#i-tright"/></svg><span class="grow">Settings</span><span class="dots"></span></div></div>
        <span class="grip grip-bl"></span>
      </div>
    </div>
  </div>

  <div class="tooltip">
    <div class="tt1">Add a node to the active tree</div>
    <div class="tt2">Python: bpy.ops.node.add_node(type="ShaderNodeAttribute", ... )</div>
  </div>

  <div class="menu submenu">
    <div class="mi hot"><u>A</u>ttribute</div>
    <div class="mi"><u>C</u>amera Data</div>
    <div class="mi"><u>F</u>resnel</div>
    <div class="mi"><u>G</u>eometry</div>
    <div class="mi"><u>H</u>air Info</div>
    <div class="mi"><u>L</u>ayer Weight</div>
    <div class="mi">Light <u>P</u>ath</div>
    <div class="mi"><u>O</u>bject Info</div>
    <div class="mi">Particle <u>I</u>nfo</div>
    <div class="mi"><u>R</u>GB</div>
    <div class="mi"><u>T</u>angent</div>
    <div class="mi">Te<u>x</u>ture Coordinate</div>
    <div class="mi"><u>U</u>V Map</div>
    <div class="mi"><u>V</u>alue</div>
    <div class="mi"><u>W</u>ireframe</div>
  </div>

  <div class="menu addmenu">
    <div class="mtitle">Add</div>
    <div class="ai"><u>S</u>earch ...</div>
    <div class="ai hot"><u>I</u>nput<span class="arr"></span></div>
    <div class="ai"><u>O</u>utput<span class="arr"></span></div>
    <div class="ai">S<u>h</u>ader<span class="arr"></span></div>
    <div class="ai"><u>T</u>exture<span class="arr"></span></div>
    <div class="ai"><u>C</u>olor<span class="arr"></span></div>
    <div class="ai"><u>V</u>ector<span class="arr"></span></div>
    <div class="ai">Co<u>n</u>verter<span class="arr"></span></div>
    <div class="ai">Sc<u>r</u>ipt<span class="arr"></span></div>
    <div class="ai"><u>G</u>roup<span class="arr"></span></div>
    <div class="ai"><u>L</u>ayout<span class="arr"></span></div>
  </div>
</div>
<script src="grid.js"></script>
</body>
</html>
```
FILE: styles.css
```css
*{box-sizing:border-box}
html,body{margin:0;padding:0;background:#393939}
body{width:1920px;height:1080px;overflow:hidden;font:11px/1 "Open Sans","Noto Sans",sans-serif;color:#0c0c0c}
.sprite{position:absolute;width:0;height:0}
.app{position:relative;width:1920px;height:1080px;overflow:hidden;display:flex;flex-direction:column}
.grow{flex:1 1 auto;min-width:0}
.ic{width:16px;height:16px;display:block;flex:none}
.ud{width:8px;height:16px;display:block;flex:none;margin-left:2px}

.winstrip{height:2px;background:#222;position:relative;flex:none}
.winpatch{position:absolute;left:296px;width:36px;top:0;height:2px;background:#444}
.titlebar{height:21px;background:#fff;display:flex;align-items:center;flex:none;font-size:11.500px;color:#111;padding-bottom:2px}
.tb-logo{margin-left:2px}
.tb-title{margin-left:5px}
.tb-controls{margin-left:auto;display:flex;gap:33px;margin-right:19px}
.tb-ic{width:12px;height:12px;display:block}

.hdr{height:27px;flex:none;display:flex;align-items:center;background:linear-gradient(#7d7d7d,#6c6c6c);border-bottom:1px solid #141414;position:relative}
.info{padding-top:1px}
.hmenu{display:flex;align-items:center}
.m-info{gap:19px;margin-left:12px}
.m-3d{gap:20px;margin-left:13px}
.m-node{gap:20.500px;margin-left:12px}
.m-ol{gap:21px;margin-left:12px}
.group{display:inline-flex;height:20px;border:1px solid #1e1e1e;border-radius:5px;overflow:hidden;flex:none}
.seg{display:flex;align-items:center;justify-content:center;height:100%;flex:none;border-right:1px solid #2a2a2a}
.seg:last-child{border-right:0}
.seg.grow{flex:1 1 auto}
.dk{background:linear-gradient(#565656,#383838);color:#f2f2f2}
.lt{background:linear-gradient(#a9a9a9,#868686)}
.lt2{background:linear-gradient(#9a9a9a,#7c7c7c)}
.mid{background:linear-gradient(#7b7b7b,#686868)}
.blue{background:linear-gradient(#7aa2df,#5680c2)}
.fld{background:linear-gradient(#8f8f8f,#b2b2b2);justify-content:flex-start;padding-left:7px}
.fld2{background:linear-gradient(#9a9a9a,#b8b8b8)}
.seltext{justify-content:flex-start;padding:0 3px 0 8px}
.seltext.gl{padding-left:6px}
.pl3{padding-left:3px}
.w16{width:16px}.w17{width:17px}.w18{width:18px}.w19{width:19px}.w20{width:20px}.w21{width:21px}.w25{width:25px}.w26{width:26px}.w28{width:28px}.w29{width:29px}.w30{width:30px}.w31{width:31px}.w32{width:32px}.w33{width:33px}.w56{width:56px}.w70{width:70px}.w79{width:79px}.w108{width:108px}.w110{width:110px}.w120{width:120px}.w150{width:150px}
.ml3{margin-left:3px}.ml4{margin-left:4px}.ml5{margin-left:5px}.ml6{margin-left:6px}.ml7{margin-left:7px}.ml8{margin-left:8px}.ml9{margin-left:9px}.ml10{margin-left:10px}.ml12{margin-left:12px}.ml13{margin-left:13px}.ml19{margin-left:19px}.ml31{margin-left:31px}
.mt5{margin-top:5px}.mt8{margin-top:8px}.mt9{margin-top:9px}
.m-layout{margin-left:13px}
.m-engine{margin-left:16px}
.m-blogo{margin-left:20px}
.stats{margin-left:9px;white-space:pre;color:#0c0c0c;letter-spacing:-.2px}

.grip{position:absolute;width:12px;height:12px;z-index:3;pointer-events:none}
.grip-tr{right:0;top:0;clip-path:polygon(0 0,100% 0,100% 100%);background:repeating-linear-gradient(45deg,#c4c4c4 0 1px,#2c2c2c 1px 2.800px)}
.grip-bl{left:0;bottom:0;clip-path:polygon(0 0,100% 100%,0 100%);background:repeating-linear-gradient(45deg,#c4c4c4 0 1px,#2c2c2c 1px 2.800px)}

.main{flex:1;display:flex;min-height:0}
.leftcol{width:1665px;display:flex;flex-direction:column;flex:none}
.rightcol{width:255px;border-left:1px solid #141414;display:flex;flex-direction:column;background:#727272}

.view3d{position:relative;height:498px;background:#393939;overflow:hidden;flex:none}
.scene{position:absolute;left:0;top:0;width:1665px;height:498px}
.axis-t{font:9px "Open Sans",sans-serif;fill:#ddd}
.ov{position:absolute;color:#f4f4f4;font-size:11px}
.persp{left:179px;top:12px;font-size:10.500px}
.objname{left:229px;top:479px}
.viewplus{position:absolute;right:0;top:22px;width:15px;height:15px;background:#333;color:#888;border-radius:3px 0 0 3px;display:flex;align-items:center;justify-content:center;font:bold 12px "DejaVu Sans",sans-serif}

.shelf{position:relative;width:160px;height:498px;background:#727272;z-index:1;display:flex;flex-direction:column}
.shelf-top{height:283px;display:flex;flex:none;overflow:hidden}
.tabs{width:20px;flex:none;background:#636363;padding:6px 0 0 3px;display:flex;flex-direction:column;gap:5px}
.tab{writing-mode:vertical-rl;transform:rotate(180deg);width:17px;display:flex;align-items:center;justify-content:flex-start;padding-top:2px;background:#686868;border-radius:0 4px 4px 0;border:1px solid #585858;border-left-color:transparent;flex:none;font-size:11.500px;color:#111;white-space:nowrap}
.tab.on{background:#727272;border-color:#727272}
.t27{height:27px}.t32{height:32px}.t44{height:44px}.t47{height:47px}.t35{height:35px}.t60{height:60px}
.panels{width:123px;flex:none;padding-left:8px}
.ph{height:24px;display:flex;align-items:center;font-size:12px;color:#141414}
.tri{width:8px;height:8px;margin-left:6px;margin-right:5px;flex:none;display:block}
.dots{width:13px;height:7px;flex:none;margin-right:1px;background:radial-gradient(circle,#333 0 .7px,transparent 1.100px) 0 0/3px 3px}
.panels .ph{width:105px}
.bstack{width:105px;border:1px solid #232323;border-radius:5px;overflow:hidden;display:flex;flex-direction:column;background:linear-gradient(#a8a8a8,#7f7f7f)}
.btn{height:19.200px;flex:none;display:flex;align-items:center;padding-left:7px;border-top:1px solid #232323;background:linear-gradient(#a8a8a8,#7f7f7f)}
.btn:first-child{border-top:0}
.bstack.one .btn{height:18px}
.dkbtn{height:20px}
.dkbtn .seg{width:100%}
.pdiv{height:1px;background:#3a3a3a;margin:7px -3px 0 -3px;width:112px}
.shading{margin-top:9px;margin-left:7px}
.vsb{width:12px;height:274px;margin-top:5px;background:#606060;border-radius:6px;flex:none;position:relative}
.vsb-thumb{position:absolute;left:0;top:0;width:12px;height:198px;border-radius:6px;background:linear-gradient(90deg,#8a8a8a,#9a9a9a);border:1px solid #555}
.shelf-mode{height:215px;background:#727272;border-top:1px solid #5c5c5c;display:flex;align-items:flex-start;font-size:12px;color:#141414;position:relative}
.shelf-mode .tri{margin:7px 5px 0 13px}
.shelf-mode .grow{padding-top:5px}
.shelf-mode .dots{margin:8px 11px 0 0}

.h3d{height:28px}

.layers{display:grid;grid-template-columns:repeat(5,9px);grid-template-rows:9px 9px;gap:1px;width:50px;height:20px;flex:none;background:#2a2a2a;border:1px solid #2a2a2a;border-radius:4px;overflow:hidden}
.layers i{background:#8c8c8c;display:block}
.layers i.on{background:#d88a2e;border:2px solid #8c8c8c;border-radius:50%}

.nodecanvas{position:relative;height:477px;flex:none;overflow:hidden;background-color:#393939;background-image:linear-gradient(90deg,#2c2c2c 1px,transparent 1px),linear-gradient(#2c2c2c 1px,transparent 1px),linear-gradient(90deg,#323232 1px,transparent 1px),linear-gradient(#323232 1px,transparent 1px);background-size:123.350px 123.350px,123.350px 123.350px,24.670px 24.670px,24.670px 24.670px;background-position:115.250px 0,0 111.650px,16.600px 0,0 13.300px}
.links{position:absolute;left:0;top:0;width:1485px;height:477px}
.node{position:absolute;border-radius:9px;border:1px solid;background:#666;box-shadow:0 2px 8px rgba(0,0,0,.35);font-size:13px;color:#111}
.nd-bsdf{left:745px;top:111px;width:187px;height:142px;border-color:#e08a1e}
.nd-out{left:1104px;top:111px;width:175px;height:112px;border-color:#b4561c}
.nhead{height:25px;background:linear-gradient(#5f5f5f,#585858);border-radius:8px 8px 0 0;display:flex;align-items:center;padding-left:26px;position:relative}
.otri{position:absolute;left:7px;top:8px;width:0;height:0;border:6px solid transparent;border-top:12px solid #c4561a;border-bottom:0}
.nd-bsdf .nhead::before{content:"";position:absolute;left:7px;top:8px;border:6px solid transparent;border-top:12px solid #e08a1e;border-bottom:0}
.nbody{position:relative;height:calc(100% - 25px)}
.n-row{height:27.500px;display:flex;align-items:center;padding-left:20px;position:relative;top:-3px}
.n-row:first-child{margin-top:2px}
.sock{position:absolute;left:-7px;top:50%;margin-top:-6.500px;width:13px;height:13px;border-radius:50%;border:1px solid #222}
.sock.right{left:auto;right:-7px}
.sock.g{background:#63c763}
.sock.gy{background:#a1a1a1}
.sock.bl{background:#6363c7}
.sock.ye{background:#c7c729}
.sock.gr{background:#a1a1a1}
.n-right{height:26px;display:flex;align-items:center;justify-content:flex-end;padding-right:27px;position:relative;margin-top:6px}
.n-color{height:24px;display:flex;align-items:center;position:relative;padding-left:13px;gap:19px;margin-top:-1px}
.swatch{width:35px;height:22px;background:#e8e8e8;border:1px solid #333;border-radius:4px;display:block}
.n-rough{height:24px;position:relative;padding-left:13px;margin-top:4px}
.pill{width:159px;height:24px;border-radius:12px;border:1px solid #333;background:linear-gradient(#a0a0a0,#c0c0c0);display:flex;align-items:center;justify-content:space-between;padding:0 20px 0 17px}
.n-norm{height:30px;display:flex;align-items:center;position:relative;padding-left:19px}
.nodeplus{position:absolute;left:1px;top:20px;width:13px;height:14px;background:#333;color:#888;border-radius:0 3px 3px 0;display:flex;align-items:center;justify-content:center;font:bold 11px "DejaVu Sans",sans-serif}
.matlabel{left:30px;top:438px}
.hsb{position:absolute;left:5px;top:462px;width:1457px;height:12px;border-radius:6px;background:linear-gradient(#9c9c9c,#7f7f7f);border:1px solid #5a5a5a}
.nvsb{position:absolute;left:1470px;top:7px;width:10px;height:448px;border-radius:5px;background:linear-gradient(90deg,#7f7f7f,#9c9c9c);border:1px solid #555}
.nside{position:absolute;left:1485px;top:0;width:180px;height:477px;background:#727272;border-left:1px solid #1e1e1e;z-index:1}
.sec{border-bottom:1px solid #4d4d4d;margin:0 2px 0 3px}
.nside .sec{height:85px;margin:0 1px 0 4px}
.ph.side{height:24px}
.ph.side .tri{margin-left:8px;margin-right:5px}
.ph.side .dots{margin-right:8px}
.frow{display:flex;align-items:center;height:20px}
.frow label{width:63px;padding-left:11px;flex:none}
.tfield{width:103px;height:20px;border:1px solid #2a2a2a;border-radius:5px;background:linear-gradient(#8f8f8f,#b2b2b2);display:flex;align-items:center;gap:6px;padding-left:4px}
.nside .sec.cl{height:24px}
.ck{width:14px;height:14px;background:#525252;border:1px solid #222;border-radius:3px;flex:none;margin-right:6px}
.ckic{margin-right:6px;width:14px;height:14px}
.nside .sec.prop{height:146px}
.inp{margin:23px 0 0 11px;height:14px}
.colrow{display:flex;align-items:center;gap:17px;height:20px;margin-top:7px;padding-left:3px}
.swatch2{width:30px;height:20px;border-radius:5px;border:1px solid #2a2a2a;background:#e8e8e8;display:block;flex:none}
.num.wide{margin:5px 0 0 3px;width:163px;height:20px;border:1px solid #2a2a2a;border-radius:10px;display:flex;align-items:center;justify-content:space-between;padding:0 14px;background:linear-gradient(90deg,#666 0 8px,transparent 8px),linear-gradient(#8f8f8f,#b0b0b0)}
.nrm{margin:10px 0 0 11px}
.nside .sec.gp{height:86px}
.tight{letter-spacing:-.2px;white-space:nowrap}
.gpnew{display:flex;width:164px;margin:8px 0 0 3px}
.gpnl{display:flex;width:164px;margin:5px 0 0 3px}
.btnseg{background:linear-gradient(#a8a8a8,#7f7f7f)}
.rel{position:relative}
.newbtn{padding-left:14px}
.gpplus{position:absolute;left:4px;top:1px}
.nside .sec.last{border-bottom:0}

.hnode{height:27px;border-top:1px solid #2a2a2a;border-bottom:0;padding-top:1px}
.usenodes{margin-left:6px;color:#e6e6e6}

.oh{height:26px;background:linear-gradient(#7b7b7b,#6e6e6e);border-bottom:1px solid #666;padding-top:1px}
.allsc{flex:1;margin-right:-6px;border-radius:5px 0 0 5px}
.outliner{height:153px;position:relative;background:#727272;flex:none;padding-top:1px}
.orow{height:20px;display:flex;background:#737373}
.orow.alt{background:#6d6d6d}
.orow.hi{background:#6d6d6d}
.orow.hi .oname{background:#7e8589}
.orow.tail{height:14px}
.oname{flex:1;min-width:0;display:flex;align-items:center;white-space:nowrap}
.oc{width:20px;flex:none;border-left:1px solid #5a5a5a;display:flex;align-items:center;justify-content:center}
.oc:last-child{width:19px}
.oc .ic{width:14px;height:14px}
.exp{width:10px;height:10px;display:block;flex:none;margin-right:4px}
.i0{padding-left:3px}
.i0 .oic{margin-left:5px}
.i1{padding-left:28px}
.i2{padding-left:42px}
.i3{padding-left:23px}
.i3 .exp{margin-right:8px}
.oname>span:not(.oic){margin-left:3px}
.oic{display:flex;align-items:center;justify-content:center;flex:none;width:18px;height:18px;border-radius:50%;margin:0 -1px}
.halo{background:#9ba1a3}
.halo2{background:#8e8e8e}
.halo3{background:#8f97a8}
.haloo{background:#b27c3d}
.whitet{color:#f2f2f2}
.osep{display:block;width:2px;height:11px;background:#444;margin:0 8px 0 9px}
.otree{position:absolute;left:0;top:0;width:60px;height:120px;pointer-events:none}
.ohsb{position:absolute;left:4px;top:135px;width:246px;height:14px;background:#5e5e5e;border-radius:7px;border:1px solid #555}
.ohsb span{display:block;width:205px;height:12px;background:linear-gradient(#a0a0a0,#808080);border-radius:6px}
.ph-hdr{height:27px;background:linear-gradient(#7b7b7b,#6e6e6e);border-top:1px solid #141414;border-bottom:1px solid #5c5c5c;overflow:hidden;padding-top:1px}
.ptabs{border-radius:5px 0 0 5px;margin-right:-20px}
.props{flex:1;background:#727272;position:relative;overflow:hidden;min-height:0}
.crumbs{display:flex;align-items:center;height:20px;margin:8px 0 0 9px}
.crumbtri{width:6px;height:8px;margin-left:5px;flex:none}
.cr-ic1{margin-left:14px}
.cr-ic2{margin-left:14px}
.crumbt{margin-left:5px}
.c-cube{margin-left:4px}
.c2{margin-left:11px}
.slots{display:flex;margin:16px 0 0 8px;align-items:flex-start}
.slotlist{width:210px;height:43px;border:1px solid #333;border-radius:6px;padding:8px 5px 0}
.slot{height:18px;background:#5680c2;color:#f0f0f0;display:flex;align-items:center;padding-left:3px;gap:5px}
.slotfoot{display:flex;align-items:center;position:relative;height:12px;margin-top:1px;padding-left:4px}
.sm{width:9px;height:9px}
.handle{position:absolute;left:103px;top:3px;width:14px;height:4px;border-top:1px solid #ddd;border-bottom:1px solid #ddd}
.slotbtns{margin-left:9px;width:20px;height:60px;border:1px solid #333;border-radius:5px;overflow:hidden;display:flex;flex-direction:column}
.slotbtns .seg{height:20px;border-right:0;border-bottom:1px solid #333}
.matsel{display:flex;margin:5px 0 0 8px}
.sec.rp{height:24px;margin:0 3px;border-bottom:0;border-top:1px solid #4d4d4d;position:relative}
.matsel+.sec.rp{margin-top:7px}
.side2 .tri{margin-left:10px;margin-right:5px}
.ph.side2{height:24px;padding-right:5px}
.sec.rp.surf{height:146px}
.sec.rp.disp{height:60px}
.prow{display:flex;align-items:center;height:20px;padding-left:12px;justify-content:space-between;padding-right:5px}
.prow label{display:block}
.prow.indent{padding-left:22px}
.p1{margin-top:7px}
.p1s{margin-top:8px}
.m16{margin-top:16px}
.m5{margin-top:5px}
.dot{display:block;width:5px;height:5px;border-radius:50%;background:#999;border:1px solid #111;flex:none;margin:0 3px}
.white{background:#e8e8e8}
.rough{justify-content:flex-end;padding-right:16px;background:linear-gradient(90deg,#666 0 9px,transparent 9px),linear-gradient(#8f8f8f,#b2b2b2)}

.tooltip{position:absolute;left:775px;top:488px;width:405px;height:54px;background:#181818;border-radius:6px;z-index:7;padding:12px 12px 0;color:#f0f0f0}
.tt1{font-size:11px;height:21px}
.tt2{font:10px "DejaVu Sans Mono",monospace;color:#757575;white-space:pre}

.menu{position:absolute;background:rgba(24,24,24,.91);color:#e8e8e8;z-index:6;box-shadow:0 1px 6px rgba(0,0,0,.4)}
.menu u{text-underline-offset:2px}
.submenu{left:651px;top:460px;width:148px;height:336px;border-radius:5px;padding-top:5px}
.mi{height:18px;margin-bottom:4px;padding-left:29px;display:flex;align-items:center;white-space:pre;letter-spacing:-.1px}
.hot{background:linear-gradient(#81a8e6,#5680c2);color:#fff}
.addmenu{left:551px;top:718px;width:100px;height:258px;border-radius:5px 0 0 5px;padding:0 1px}
.mtitle{height:30px;border-bottom:1px solid #444;display:flex;align-items:center;padding-left:8px;color:#888;margin:0 -1px 5px;padding-top:2px}
.ai{height:18px;margin-bottom:2px;padding-left:29px;display:flex;align-items:center;position:relative;white-space:pre}
.arr{position:absolute;right:5px;top:5px;border:4px solid transparent;border-left:6px solid #888;border-right:0}
```
FILE: grid.js
```js
(function () {
  var g = document.getElementById('grid');
  var NS = 'http://www.w3.org/2000/svg';
  var a = -0.0803, b = 0.03655;
  var VX = [508, -100], VY = [2901, -130], O = [912, 299];
  function project(x, y) {
    var d = 1 + a * x + b * y;
    return [
      (O[0] + a * x * VX[0] + b * y * VY[0]) / d,
      (O[1] + a * x * VX[1] + b * y * VY[1]) / d
    ];
  }
  function line(p, q) {
    var l = document.createElementNS(NS, 'line');
    l.setAttribute('x1', p[0]); l.setAttribute('y1', p[1]);
    l.setAttribute('x2', q[0]); l.setAttribute('y2', q[1]);
    g.appendChild(l);
  }
  for (var i = -8; i <= 8; i++) {
    if (i === 0) continue;
    line(project(i, -8), project(i, 8));
    line(project(-8, i), project(8, i));
  }
}());
```
